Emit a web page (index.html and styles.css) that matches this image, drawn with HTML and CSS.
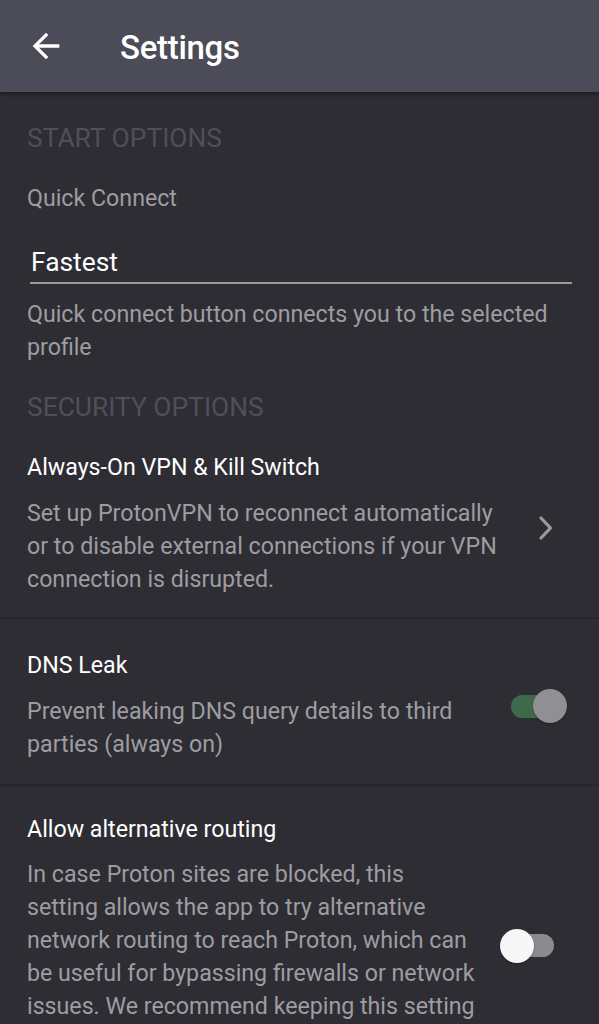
FILE: index.html
```html
<!DOCTYPE html>
<html lang="en">
<head>
<meta charset="utf-8">
<title>Settings</title>
<link rel="stylesheet" href="styles.css">
</head>
<body>
<header class="appbar">
  <svg class="back" viewBox="0 0 24 24" width="40" height="40" aria-hidden="true">
    <path d="M20 11H7.83l5.59-5.59L12 4l-8 8 8 8 1.41-1.41L7.83 13H20v-2z" fill="#ffffff"/>
  </svg>
  <h1 class="appbar-title">Settings</h1>
</header>
<main class="content">
  <section class="group">
    <h2 class="section-head">START OPTIONS</h2>
    <div class="qc">
      <div class="qc-label">Quick Connect</div>
      <div class="field"><span class="field-value">Fastest</span></div>
      <p class="desc qc-desc">Quick connect button connects you to the selected profile</p>
    </div>
  </section>
  <section class="group">
    <h2 class="section-head sec2">SECURITY OPTIONS</h2>
    <div class="row first">
      <div class="row-text">
        <div class="row-title">Always-On VPN &amp; Kill Switch</div>
        <p class="desc">Set up ProtonVPN to reconnect automatically or to disable external connections if your VPN connection is disrupted.</p>
      </div>
      <svg class="chev" viewBox="0 0 16 26" width="16" height="26" aria-hidden="true">
        <path d="M3 3 L12.5 13 L3 23" fill="none" stroke="#9c9ca0" stroke-width="3.2" stroke-linecap="round" stroke-linejoin="round"/>
      </svg>
    </div>
    <div class="row mid">
      <div class="row-text">
        <div class="row-title">DNS Leak</div>
        <p class="desc">Prevent leaking DNS query details to third parties (always on)</p>
      </div>
      <div class="switch on dns"><span class="track"></span><span class="thumb"></span></div>
    </div>
    <div class="row last">
      <div class="row-text">
        <div class="row-title">Allow alternative routing</div>
        <p class="desc">In case Proton sites are blocked, this setting allows the app to try alternative network routing to reach Proton, which can be useful for bypassing firewalls or network issues. We recommend keeping this setting on for greater reliability.</p>
      </div>
      <div class="switch off alt"><span class="track"></span><span class="thumb"></span></div>
    </div>
  </section>
</main>
</body>
</html>
```
FILE: styles.css
```css
html, body {
  margin: 0;
  padding: 0;
  background: #2e2d34;
}
body {
  font-family: Roboto, "Noto Sans", "Liberation Sans", sans-serif;
  color: #ffffff;
  width: 599px;
  height: 1024px;
  overflow: hidden;
}
.appbar {
  height: 92px;
  background: #4b4c57;
  display: flex;
  align-items: center;
  box-shadow: 0 2px 4px rgba(0, 0, 0, 0.45);
  position: relative;
  z-index: 1;
}
.back {
  margin-left: 26px;
  margin-top: -1px;
  flex: none;
}
.appbar-title {
  margin: 3px 0 0 54px;
  font-size: 33px;
  font-weight: 500;
  letter-spacing: -0.3px;
  line-height: 40px;
  color: #ffffff;
}
.content {
  padding-top: 30px;
}
.section-head {
  margin: 0;
  padding: 0 27px;
  font-size: 26.4px;
  font-weight: 400;
  line-height: 33px;
  color: #4f4f5a;
}
.sec2 {
  margin-top: 27px;
}
.qc {
  padding: 27px 27px 0 27px;
}
.qc-label {
  font-size: 23.2px;
  line-height: 33px;
  color: #9d9da1;
}
.field {
  margin-top: 31px;
  padding-left: 1px;
  padding-bottom: 3px;
  border-bottom: 2px solid #9a9a9e;
  margin-left: 3px;
}
.field-value {
  font-size: 26.4px;
  line-height: 33px;
  color: #ffffff;
  display: block;
}
.desc {
  margin: 0;
  font-size: 23.2px;
  line-height: 33px;
  color: #9d9da1;
}
.qc-desc {
  margin-top: 14px;
}
.row {
  display: flex;
  align-items: center;
  padding: 27px 27px 23px 27px;
  border-bottom: 2px solid #27262c;
}
.row.first {
  padding-bottom: 21px;
}
.row.mid {
  padding-top: 30px;
}
.row.last {
  border-bottom: none;
}
.row-text {
  flex: 1;
  min-width: 0;
}
.row-title {
  font-size: 23.2px;
  line-height: 33px;
  color: #ffffff;
  margin-bottom: 13px;
}
.chev {
  flex: none;
  margin-left: 22px;
  margin-right: 18px;
  margin-top: 8px;
}
.switch {
  flex: none;
  position: relative;
  width: 56px;
  height: 34px;
}
.switch .track {
  position: absolute;
  left: 0;
  top: 5.5px;
  width: 50px;
  height: 23px;
  border-radius: 12px;
}
.switch .thumb {
  position: absolute;
  top: 0;
  width: 34px;
  height: 34px;
  border-radius: 50%;
  box-shadow: 0 1px 2px rgba(0, 0, 0, 0.35);
}
.switch.on .track {
  background: #3f6a4a;
}
.switch.on .thumb {
  right: 0;
  background: #8f8f94;
}
.switch.off .track {
  left: 4px;
  background: #8b8b8f;
}
.switch.off .thumb {
  left: 0;
  background: #f7f7f7;
}
.dns {
  margin-left: 30px;
  margin-right: 5px;
  margin-top: 2px;
}
.alt {
  margin-left: 20px;
  margin-right: 16px;
  margin-top: 22px;
}
.row.last .row-title {
  margin-bottom: 12px;
}
```
